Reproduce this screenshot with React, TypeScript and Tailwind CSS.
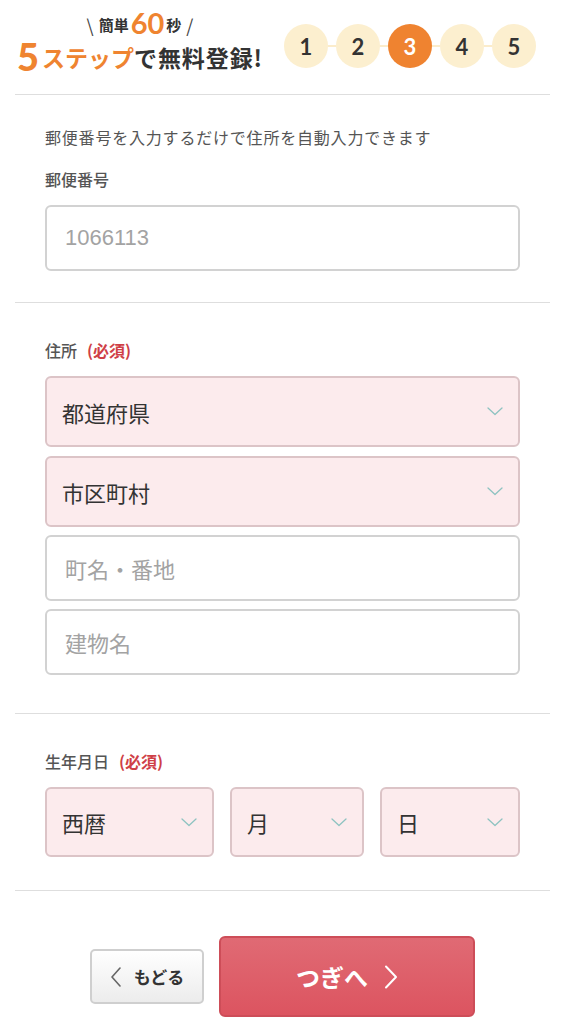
import React from "react";

const jp = "font-['Noto_Sans_CJK_JP',sans-serif]";

function Chevron() {
  return (
    <svg width="16" height="9" viewBox="0 0 16 9" className="shrink-0">
      <path d="M1 1l7 6.5L15 1" stroke="#8ec3c1" strokeWidth="1.3" fill="none" strokeLinecap="round" strokeLinejoin="round" />
    </svg>
  );
}

function SelectBox({ label, h, className = "" }: { label: string; h: string; className?: string }) {
  return (
    <div
      className={`flex items-center justify-between rounded-[6px] border-2 border-[#dcc4c7] bg-[#fcebed] pl-[15px] pr-[15px] ${h} ${className}`}
    >
      <span className="text-[22px] leading-none text-[#333]">{label}</span>
      <Chevron />
    </div>
  );
}

function TextBox({ placeholder, latin = false }: { placeholder: string; latin?: boolean }) {
  return (
    <input
      placeholder={placeholder}
      className={`block h-[66px] w-full rounded-[6px] border-2 border-[#d2d2d2] bg-white px-[18px] text-[22px] text-[#333] outline-none placeholder:text-[#a3a3a3] ${
        latin ? "font-['Liberation_Sans','Noto_Sans_CJK_JP',sans-serif]" : jp
      }`}
    />
  );
}

function Label({ text, required = false }: { text: string; required?: boolean }) {
  return (
    <div className="flex items-center text-[16px] leading-[22px] font-medium text-[#555]">
      <span>{text}</span>
      {required && <span className="ml-[10px] font-bold text-[#cf3f47]">(必須)</span>}
    </div>
  );
}

export default function App() {
  const steps = [1, 2, 3, 4, 5];
  return (
    <div className={`min-h-[1024px] w-[565px] bg-white px-[15px] ${jp}`}>
      {/* Header */}
      <div className="flex h-[95px] items-start justify-between border-b border-[#dedede] pr-[14px]">
        <div className="flex w-[250px] flex-col items-center pt-[8px]">
          <div className="flex h-[28px] items-end font-bold text-[#333] leading-[22px]">
            <span className="mr-[5px] text-[18px] font-normal text-[#444]">\</span>
            <span className="text-[15px]">簡単</span>
            <span className="mx-[2px] font-['Lato',sans-serif] text-[29px] font-bold leading-[26px] text-[#ef8430]">60</span>
            <span className="text-[15px]">秒</span>
            <span className="ml-[5px] text-[18px] font-normal text-[#444]">/</span>
          </div>
          <div className="mt-[2px] flex h-[34px] items-end font-bold leading-[30px]">
            <span className="mr-[3px] font-['Lato',sans-serif] text-[38px] font-black leading-[32px] text-[#ef8430]">5</span>
            <span className="text-[23px] text-[#ef8430]">ステップ</span>
            <span className="text-[23px] tracking-[0.04em] text-[#333]">で無料登録!</span>
          </div>
        </div>
        <div className="mt-[24px] flex items-center">
          {steps.map((s, i) => (
            <React.Fragment key={s}>
              {i > 0 && <div className="h-[2px] w-[8px] bg-[#fbeccb]" />}
              <div
                className={`flex h-[44px] w-[44px] items-center justify-center rounded-full text-[22px] font-bold font-['Lato','Noto_Sans',sans-serif] ${
                  s === 3 ? "bg-[#ef8330] text-white" : "bg-[#fcefcf] text-[#333]"
                }`}
              >
                {s}
              </div>
            </React.Fragment>
          ))}
        </div>
      </div>

      {/* Postal code */}
      <div className="border-b border-[#dedede] px-[30px] pt-[30px] pb-[31px]">
        <p className="text-[16px] leading-[24px] tracking-[0.05em] text-[#555]">
          郵便番号を入力するだけで住所を自動入力できます
        </p>
        <div className="mt-[19px]">
          <Label text="郵便番号" />
        </div>
        <div className="mt-[15px]">
          <TextBox placeholder="1066113" latin />
        </div>
      </div>

      {/* Address */}
      <div className="border-b border-[#dedede] px-[30px] pt-[36px] pb-[38px]">
        <Label text="住所" required />
        <div className="mt-[15px] flex flex-col">
          <SelectBox label="都道府県" h="h-[71px]" />
          <SelectBox label="市区町村" h="h-[71px]" className="mt-[9px]" />
          <div className="mt-[8px]">
            <TextBox placeholder="町名・番地" />
          </div>
          <div className="mt-[8px]">
            <TextBox placeholder="建物名" />
          </div>
        </div>
      </div>

      {/* Birthday */}
      <div className="border-b border-[#dedede] px-[30px] pt-[36px] pb-[33px]">
        <Label text="生年月日" required />
        <div className="mt-[15px] flex gap-[16px]">
          <SelectBox label="西暦" h="h-[70px]" className="w-[169px]" />
          <SelectBox label="月" h="h-[70px]" className="w-[134px]" />
          <SelectBox label="日" h="h-[70px]" className="flex-1" />
        </div>
      </div>

      {/* Buttons */}
      <div className="flex items-center justify-center gap-[15px] pt-[45px]">
        <button className="flex h-[55px] w-[114px] items-center justify-center gap-[12px] rounded-[5px] border-2 border-[#cfcfcf] bg-gradient-to-b from-white to-[#ececec]">
          <svg width="12" height="20" viewBox="0 0 12 20">
            <path d="M10 1L2 10l8 9" stroke="#666" strokeWidth="1.6" fill="none" strokeLinecap="round" strokeLinejoin="round" />
          </svg>
          <span className="text-[17px] font-bold text-[#333]">もどる</span>
        </button>
        <button className="flex h-[81px] w-[256px] items-center justify-center gap-[16px] rounded-[6px] border-2 border-[#cd4d58] bg-gradient-to-b from-[#e06a74] to-[#dc5460]">
          <span className="text-[24px] font-bold text-white">つぎへ</span>
          <svg width="14" height="24" viewBox="0 0 14 24">
            <path d="M2 1.5L12 12 2 22.5" stroke="#fff" strokeWidth="2" fill="none" strokeLinecap="round" strokeLinejoin="round" />
          </svg>
        </button>
      </div>
    </div>
  );
}
